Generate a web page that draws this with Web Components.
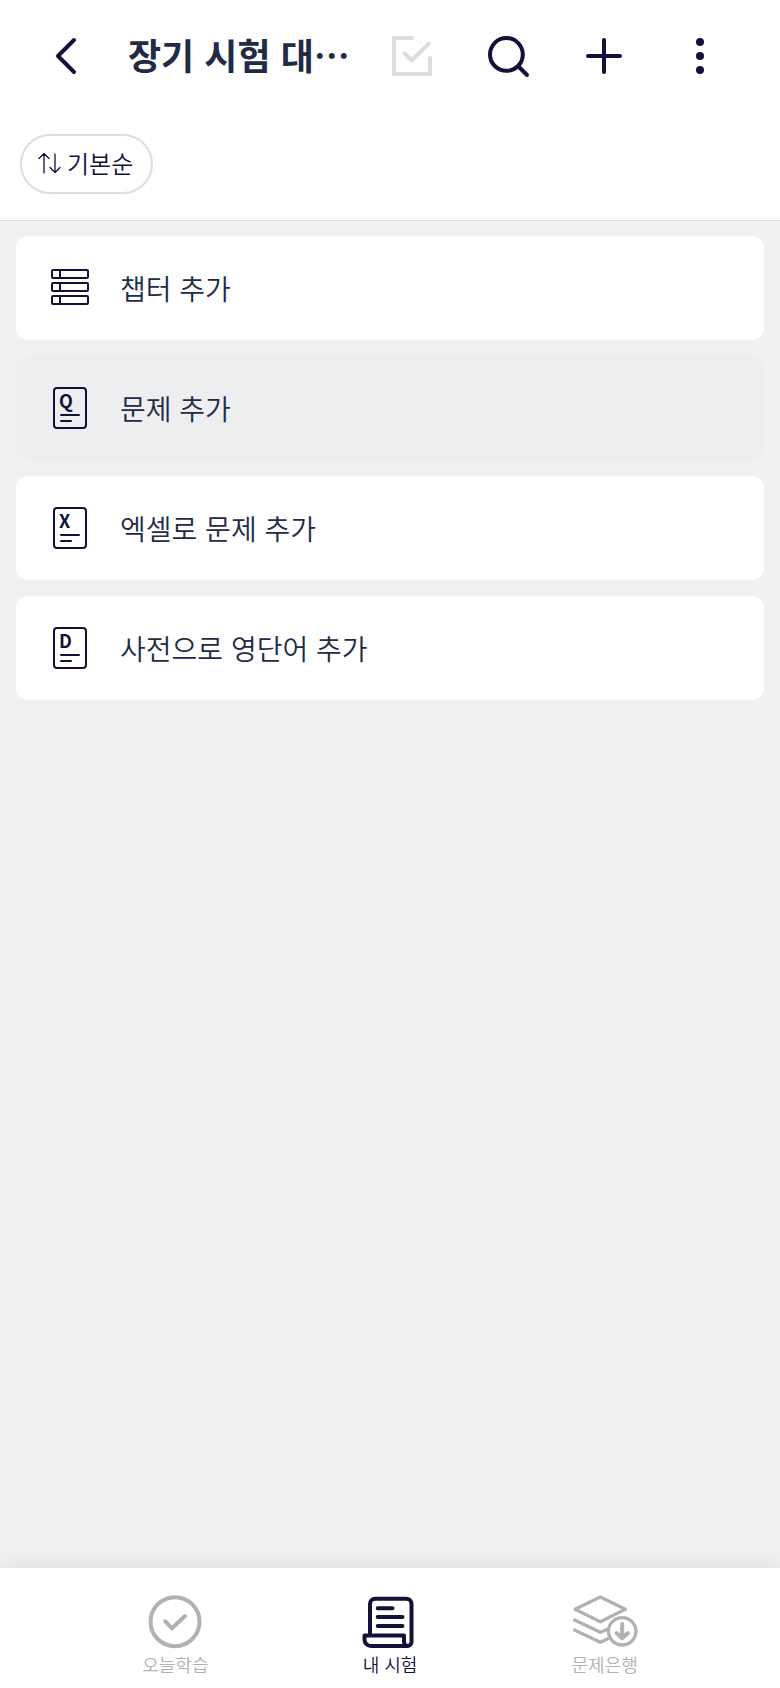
<!DOCTYPE html>
<html lang="ko">
<head>
<meta charset="utf-8">
<meta name="viewport" content="width=device-width, initial-scale=1">
<title>내 시험</title>
<style>
    html, body { margin: 0; }
    body {
        --ink: #11113a;
        --text: #222b45;
        --line: #dddddd;
        --muted: #b1b1b1;
        --bg: #f1f1f1;
        font-family: "Noto Sans CJK KR", "Noto Sans", sans-serif;
        font-weight: 350;
        color: var(--text);
        background: var(--bg);
    }
</style>
</head>
<body>
<exam-page></exam-page>

<script>
const doc = letter => `
    <g stroke-width="2"><rect x="8" y="4" width="32" height="40" rx="3"/><path d="M15 31H33M15 37H25"/></g>
    <text x="13" y="24" font-size="18" font-weight="700" fill="currentColor" stroke="none">${letter}</text>`

const icons = {
    back: ['0 0 48 48', '<path d="M34 8L18 24L34 40"/>'],
    check: ['0 0 48 48', '<path d="M24 6H6V42H42V26M16.3 21.3L23.7 28.5L40.7 11.7"/>'],
    search: ['0 0 48 48', '<circle cx="22.4" cy="22.4" r="16.4"/><path d="M34.5 34.5L43 43"/>'],
    plus: ['0 0 48 48', '<path d="M8 24H40M24 8V40"/>'],
    more: ['0 0 48 48', '<g fill="currentColor" stroke="none"><circle cx="24" cy="10" r="4"/><circle cx="24" cy="24" r="4"/><circle cx="24" cy="38" r="4"/></g>'],
    sort: ['0 0 24 24', '<path stroke-width="1.3" d="M8 22V3M3 7.5L8 2.5L13 7.5M19 3V21M14 16.5L19 21.5L24 16.5"/>'],
    chapter: ['0 0 48 48', '<g stroke-width="2"><rect x="6" y="6" width="36" height="8" rx="1"/><rect x="6" y="19" width="36" height="8" rx="1"/><rect x="6" y="32" width="36" height="8" rx="1"/><path d="M14 6V14M14 19V27M14 32V40"/></g>'],
    question: ['0 0 48 48', doc('Q')],
    excel: ['0 0 48 48', doc('X')],
    dictionary: ['0 0 48 48', doc('D')],
    today: ['0 0 64 56', '<circle cx="32" cy="27.7" r="24.5"/><path d="M22.3 27.3L29 34.3L42 22"/>'],
    exam: ['0 0 64 56', '<path d="M12 41V10a5.3 5.3 0 0 1 5.3-5.3H48.2a5.3 5.3 0 0 1 5.3 5.3V48a4 4 0 0 1-4 4H13a6.5 6.5 0 0 1-6.5-6.5V41.5H46V48a4 4 0 0 0 4 4M19.7 14.3H34.5M19.7 23H44.5M19.7 32H44.5"/>'],
    bank: ['0 0 64 56', '<g stroke-width="3.3"><path d="M27.3 2.9L52.3 15.3L27.3 27.7L2 15.3Z"/><path stroke-linecap="butt" d="M.5 25.5L27.3 38.3L35.6 34.8M.5 35.5L27.3 48.3L35.6 44.4"/><circle cx="49.2" cy="37.3" r="13.7"/></g><path d="M49.2 30V44M43.5 39L49.2 44.3L54.9 39"/>'],
}

class AppIcon extends HTMLElement {
    constructor() {
        super();
        this.attachShadow({ mode: 'open' });
    }
    connectedCallback() {
        const [viewBox, shape] = icons[this.getAttribute('name')];
        this.shadowRoot.innerHTML = `
        <style>
            :host { display: block; flex: none; width: 48px; height: 48px; }
            svg { display: block; width: 100%; height: 100%; overflow: visible; }
        </style>
        <svg viewBox="${viewBox}" fill="none" stroke="currentColor" stroke-width="4"
            stroke-linecap="round" stroke-linejoin="round" aria-hidden="true">${shape}</svg>`;
    }
}
customElements.define('app-icon', AppIcon)

class IconButton extends HTMLElement {
    constructor() {
        super();
        this.attachShadow({ mode: 'open' });
    }
    connectedCallback() {
        this.shadowRoot.innerHTML = `
        <style>
            :host { display: block; flex: none; }
            button {
                display: flex;
                align-items: center;
                justify-content: center;
                width: 96px;
                height: 96px;
                padding: 0;
                border: 0;
                background: none;
                color: var(--ink);
            }
            button:disabled { color: var(--line); }
        </style>
        <button type="button" aria-label="${this.getAttribute('label')}" ${this.hasAttribute('disabled') ? 'disabled' : ''}>
            <app-icon name="${this.getAttribute('icon')}"></app-icon>
        </button>`;
    }
}
customElements.define('icon-button', IconButton)

class TopBar extends HTMLElement {
    constructor() {
        super();
        this.attachShadow({ mode: 'open' });
        this.shadowRoot.innerHTML = `
        <style>
            :host { display: block; background: #fff; border-bottom: 1px solid var(--line); }
            header { display: flex; align-items: center; padding: 8px 32px 8px 16px; }
            h1 {
                flex: 1;
                min-width: 0;
                margin: 0;
                padding: 0 0 4px 16px;
                overflow: hidden;
                white-space: nowrap;
                font-size: 36px;
                line-height: 48px;
                font-weight: 700;
            }
            .filters { display: flex; padding: 22px 20px 26px; }
        </style>
        <header>
            <icon-button icon="back" label="뒤로"></icon-button>
            <h1><slot></slot></h1>
            <slot name="actions"></slot>
        </header>
        <div class="filters"><slot name="filters"></slot></div>`;
    }
}
customElements.define('top-bar', TopBar)

class SortChip extends HTMLElement {
    constructor() {
        super();
        this.attachShadow({ mode: 'open' });
        this.shadowRoot.innerHTML = `
        <style>
            :host { display: block; }
            button {
                display: flex;
                align-items: center;
                gap: 7px;
                height: 60px;
                padding: 0 18px 2px 14px;
                border: 2px solid var(--line);
                border-radius: 30px;
                background: #fff;
                color: var(--ink);
                font: inherit;
                font-size: 24px;
                line-height: 32px;
            }
            app-icon { width: 24px; height: 24px; }
        </style>
        <button type="button"><app-icon name="sort"></app-icon><slot></slot></button>`;
    }
}
customElements.define('sort-chip', SortChip)

class AddRow extends HTMLElement {
    constructor() {
        super();
        this.attachShadow({ mode: 'open' });
    }
    connectedCallback() {
        this.shadowRoot.innerHTML = `
        <style>
            :host { display: block; }
            button {
                display: flex;
                align-items: center;
                gap: 26px;
                width: 100%;
                height: 104px;
                padding: 0 30px;
                border: 0;
                border-radius: 12px;
                background: #fff;
                color: var(--text);
                font: inherit;
                font-size: 28px;
                line-height: 40px;
                text-align: left;
            }
            :host([pressed]) button { background: #edeeef; }
            app-icon { color: var(--ink); }
        </style>
        <button type="button">
            <app-icon name="${this.getAttribute('icon')}"></app-icon>
            <span><slot></slot></span>
        </button>`;
    }
}
customElements.define('add-row', AddRow)

class TabItem extends HTMLElement {
    constructor() {
        super();
        this.attachShadow({ mode: 'open' });
    }
    connectedCallback() {
        this.shadowRoot.innerHTML = `
        <style>
            :host { display: block; flex: 1; }
            a {
                display: flex;
                flex-direction: column;
                align-items: center;
                padding: 26px 0 10px;
                color: var(--muted);
                font-size: 18px;
                line-height: 28px;
                text-decoration: none;
            }
            :host([active]) a { color: var(--ink); }
            app-icon { width: 64px; height: 56px; }
        </style>
        <a href="#${this.getAttribute('icon')}"><app-icon name="${this.getAttribute('icon')}"></app-icon><slot></slot></a>`;
    }
}
customElements.define('tab-item', TabItem)

class TabBar extends HTMLElement {
    constructor() {
        super();
        this.attachShadow({ mode: 'open' });
        this.shadowRoot.innerHTML = `
        <style>
            :host { display: block; background: #fff; box-shadow: 0 0 20px rgba(0, 0, 0, .1); }
            nav { display: flex; padding: 0 68px; }
        </style>
        <nav><slot></slot></nav>`;
    }
}
customElements.define('tab-bar', TabBar)

class ExamPage extends HTMLElement {
    constructor() {
        super();
        this.attachShadow({ mode: 'open' });
        this.shadowRoot.innerHTML = `
        <style>
            :host { display: flex; flex-direction: column; min-height: 100vh; }
            main { flex: 1; display: flex; flex-direction: column; gap: 16px; padding: 15px 16px 16px; }
        </style>
        <top-bar>
            장기 시험 대…
            <icon-button slot="actions" icon="check" label="선택" disabled></icon-button>
            <icon-button slot="actions" icon="search" label="검색"></icon-button>
            <icon-button slot="actions" icon="plus" label="추가"></icon-button>
            <icon-button slot="actions" icon="more" label="더보기"></icon-button>
            <sort-chip slot="filters">기본순</sort-chip>
        </top-bar>
        <main>
            <add-row icon="chapter">챕터 추가</add-row>
            <add-row icon="question" pressed>문제 추가</add-row>
            <add-row icon="excel">엑셀로 문제 추가</add-row>
            <add-row icon="dictionary">사전으로 영단어 추가</add-row>
        </main>
        <tab-bar>
            <tab-item icon="today">오늘학습</tab-item>
            <tab-item icon="exam" active>내 시험</tab-item>
            <tab-item icon="bank">문제은행</tab-item>
        </tab-bar>`;
    }
}
customElements.define('exam-page', ExamPage)
</script>
</body>
</html>
